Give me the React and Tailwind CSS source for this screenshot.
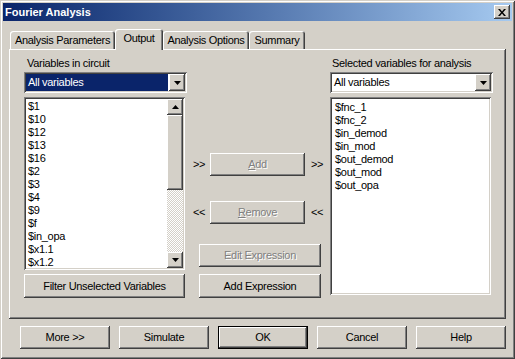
import React from "react";

const raised =
  "bg-[#d4d0c8] shadow-[inset_-1px_-1px_#404040,inset_1px_1px_#fff,inset_-2px_-2px_#808080,inset_2px_2px_#d4d0c8]";
const sunken =
  "shadow-[inset_1px_1px_#808080,inset_-1px_-1px_#fff,inset_2px_2px_#404040,inset_-2px_-2px_#d4d0c8]";
const disabledText = "text-[#808080] [text-shadow:1px_1px_#fff]";

function DownTri() {
  return (
    <svg width="7" height="4" viewBox="0 0 7 4">
      <polygon points="0,0 7,0 3.5,4" fill="#000" />
    </svg>
  );
}
function UpTri() {
  return (
    <svg width="7" height="4" viewBox="0 0 7 4">
      <polygon points="0,4 7,4 3.5,0" fill="#000" />
    </svg>
  );
}

function Combo({ selected, width }) {
  return (
    <div className={`${sunken} bg-white p-[2px] h-[21px] flex ${width}`}>
      <div className="flex-1 flex items-center pr-[1px]">
        {selected ? (
          <div className="h-full w-full bg-[#0a246a] text-white flex items-center pl-[2px]">
            All variables
          </div>
        ) : (
          <div className="pl-[2px]">All variables</div>
        )}
      </div>
      <div className={`${raised} w-[16px] h-[17px] flex items-center justify-center`}>
        <DownTri />
      </div>
    </div>
  );
}

function Btn({ children, className = "", disabled }) {
  return (
    <div
      className={`${raised} flex items-center justify-center ${disabled ? disabledText : "text-black"} ${className}`}
    >
      {children}
    </div>
  );
}

const leftItems = ["$1", "$10", "$12", "$13", "$16", "$2", "$3", "$4", "$9", "$f", "$in_opa", "$x1.1", "$x1.2"];
const rightItems = ["$fnc_1", "$fnc_2", "$in_demod", "$in_mod", "$out_demod", "$out_mod", "$out_opa"];

export default function App() {
  return (
    <div className="w-[515px] h-[359px] bg-[#d4d0c8] p-[3px] flex flex-col font-['Liberation_Sans',Arial,sans-serif] text-[11px] leading-[13px] tracking-[-0.3px] text-black shadow-[inset_1px_1px_#d4d0c8,inset_-1px_-1px_#404040,inset_2px_2px_#fff,inset_-2px_-2px_#808080] overflow-hidden">
      {/* Title bar */}
      <div className="h-[18px] bg-gradient-to-r from-[#0a246a] to-[#a6caf0] flex items-center justify-between pl-[2px] pr-[2px]">
        <span className="text-white font-bold text-[11px] tracking-normal">Fourier Analysis</span>
        <div className={`${raised} w-[16px] h-[14px] flex items-center justify-center`}>
          <svg width="8" height="7" viewBox="0 0 8 7">
            <path d="M0 0 L2 0 L4 2.5 L6 0 L8 0 L5 3.5 L8 7 L6 7 L4 4.5 L2 7 L0 7 L3 3.5 Z" fill="#000" />
          </svg>
        </div>
      </div>

      <div className="px-[6px] flex flex-col">
        {/* Tabs */}
        <div className="mt-[8px] h-[20px] flex items-end pl-[1px]">
          <div className="h-[18px] w-[105px] rounded-t-[3px] flex items-center justify-center shadow-[inset_1px_1px_#fff,inset_-1px_0_#404040,inset_-2px_0_#808080]">
            Analysis Parameters
          </div>
          <div className="relative z-10 -mb-[1px] h-[21px] w-[48px] bg-[#d4d0c8] rounded-t-[3px] flex items-center justify-center pb-[2px] shadow-[inset_1px_1px_#fff,inset_-1px_0_#404040,inset_-2px_0_#808080]">
            Output
          </div>
          <div className="h-[18px] w-[86px] rounded-t-[3px] flex items-center justify-center shadow-[inset_1px_1px_#fff,inset_-1px_0_#404040,inset_-2px_0_#808080]">
            Analysis Options
          </div>
          <div className="h-[18px] w-[56px] rounded-t-[3px] flex items-center justify-center shadow-[inset_1px_1px_#fff,inset_-1px_0_#404040,inset_-2px_0_#808080]">
            Summary
          </div>
        </div>

        {/* Panel */}
        <div className={`${raised} h-[270px] w-[497px] flex pl-[15px] pt-[8px]`}>
          {/* Left column */}
          <div className="w-[163px] flex flex-col">
            <div className="pl-[3px] h-[13px]">Variables in circuit</div>
            <div className="mt-[2px]">
              <Combo selected width="w-[163px]" />
            </div>
            <div className={`${sunken} bg-white mt-[4px] h-[173px] w-[161px] p-[2px] flex`}>
              <div className="flex-1 overflow-hidden pl-[2px] pt-[1px]">
                {leftItems.map((t) => (
                  <div key={t} className="h-[13px] whitespace-nowrap">{t}</div>
                ))}
              </div>
              <div className="w-[16px] flex flex-col">
                <div className={`${raised} h-[16px] flex items-center justify-center`}>
                  <UpTri />
                </div>
                <div className={`${raised} h-[75px]`} />
                <div className="flex-1 bg-[repeating-conic-gradient(#fff_0_25%,#d4d0c8_0_50%)] bg-[length:2px_2px]" />
                <div className={`${raised} h-[16px] flex items-center justify-center`}>
                  <DownTri />
                </div>
              </div>
            </div>
            <Btn className="mt-[4px] h-[24px] w-[161px]">Filter Unselected Variables</Btn>
          </div>

          {/* Middle column */}
          <div className="w-[143px] flex flex-col">
            <div className="mt-[96px] ml-[6px] flex items-center">
              <span className="w-[17px]">&gt;&gt;</span>
              <Btn disabled className="h-[23px] w-[95px]">
                <span><span className="underline">A</span>dd</span>
              </Btn>
              <span className="ml-[6px]">&gt;&gt;</span>
            </div>
            <div className="mt-[25px] ml-[6px] flex items-center">
              <span className="w-[17px]">&lt;&lt;</span>
              <Btn disabled className="h-[23px] w-[95px]">
                <span><span className="underline">R</span>emove</span>
              </Btn>
              <span className="ml-[6px]">&lt;&lt;</span>
            </div>
            <Btn disabled className="mt-[20px] ml-[12px] h-[23px] w-[122px]">Edit Expression</Btn>
            <Btn className="mt-[7px] ml-[12px] h-[24px] w-[122px]">Add Expression</Btn>
          </div>

          {/* Right column */}
          <div className="w-[163px] flex flex-col">
            <div className="pl-[2px] h-[13px]">Selected variables for analysis</div>
            <div className="mt-[2px]">
              <Combo width="w-[163px]" />
            </div>
            <div className={`${sunken} bg-white mt-[4px] h-[198px] w-[161px] p-[2px]`}>
              <div className="pl-[3px] pt-[2px]">
                {rightItems.map((t) => (
                  <div key={t} className="h-[13px] whitespace-nowrap">{t}</div>
                ))}
              </div>
            </div>
          </div>
        </div>

        {/* Bottom buttons */}
        <div className="mt-[7px] pl-[11px] flex gap-[9px]">
          <Btn className="h-[23px] w-[90px]">More &gt;&gt;</Btn>
          <Btn className="h-[23px] w-[90px]">Simulate</Btn>
          <div className="h-[23px] w-[90px] border border-black">
            <Btn className="h-full w-full">OK</Btn>
          </div>
          <Btn className="h-[23px] w-[90px]">Cancel</Btn>
          <Btn className="h-[23px] w-[90px]">Help</Btn>
        </div>
      </div>
    </div>
  );
}
